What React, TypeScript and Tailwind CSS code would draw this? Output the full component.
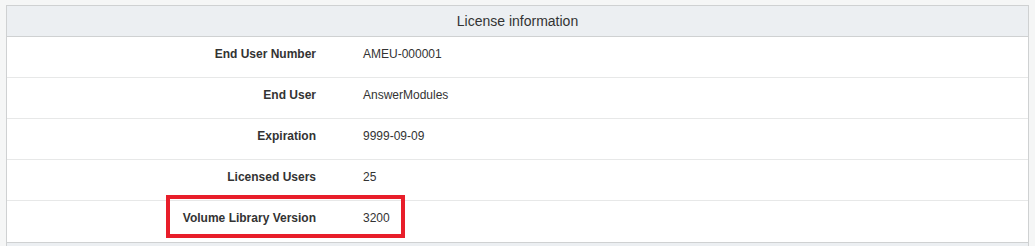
import React from 'react';

const rows = [
  { label: 'End User Number', value: 'AMEU-000001' },
  { label: 'End User', value: 'AnswerModules' },
  { label: 'Expiration', value: '9999-09-09' },
  { label: 'Licensed Users', value: '25' },
  { label: 'Volume Library Version', value: '3200', marked: true },
];

export default function App() {
  return (
    <div className="w-[1035px] h-[246px] bg-[#f5f6f6] pt-[5px] pl-[6px] overflow-hidden font-['Liberation_Sans',Arial,sans-serif] text-[#333]">
      <div className="w-[1023px] border border-[#cfd1d2] bg-white">
        <div className="h-[31px] bg-[#eceff2] border-b border-[#cfd1d2] flex items-center justify-center text-[14px]">
          License information
        </div>
        {rows.map((row, i) => (
          <div
            key={row.label}
            className={`relative flex h-[41px] text-[12px] ${i < rows.length - 1 ? 'border-b border-[#e7e8e8]' : ''}`}
          >
            <div className="w-[309px] shrink-0 pt-[8px] text-right font-bold">{row.label}</div>
            <div className="pl-[47px] pt-[8px]">{row.value}</div>
            {row.marked && (
              <div className="absolute left-[159px] top-[-6px] w-[239px] h-[43px] border-[4px] border-[#e81e2a]" />
            )}
          </div>
        ))}
        <div className="h-[6px] bg-[#eceff2] border-t border-[#cfd1d2]" />
      </div>
    </div>
  );
}
